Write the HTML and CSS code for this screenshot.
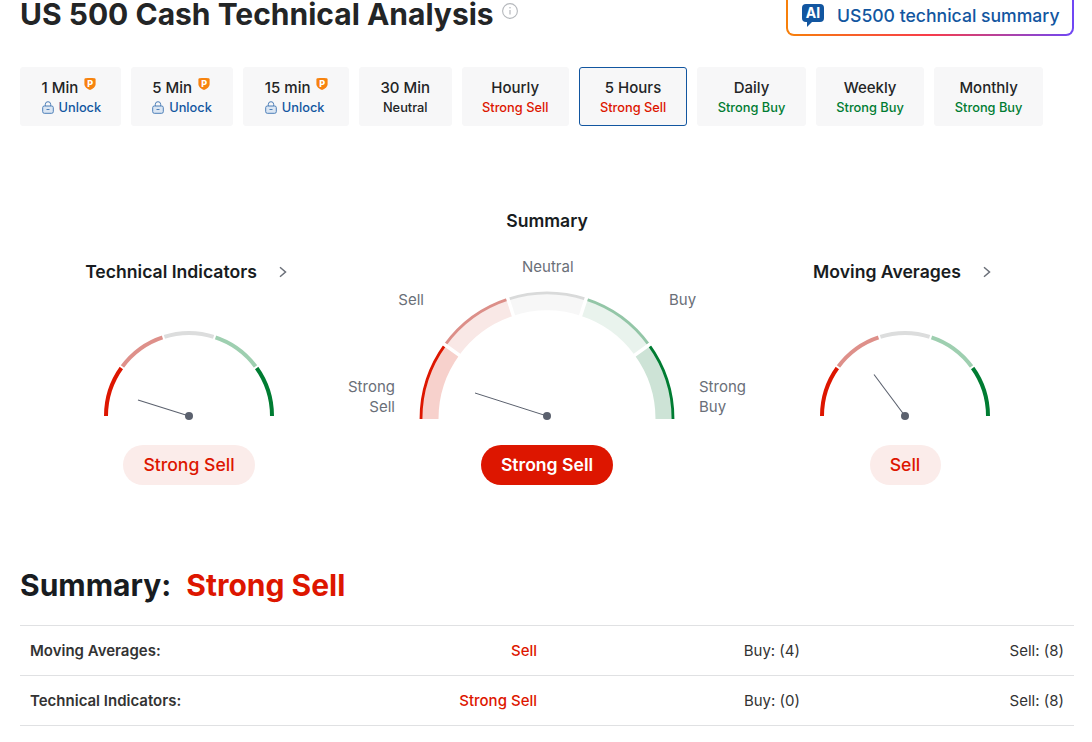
FILE: index.html
```html
<!DOCTYPE html>
<html lang="en">
<head>
<meta charset="utf-8">
<title>US 500 Cash Technical Analysis</title>
<link rel="stylesheet" href="styles.css">
</head>
<body>
<main class="page">
  <header class="header">
    <div class="title-wrap">
      <h1 class="title">US 500 Cash Technical Analysis</h1>
      <svg class="info" width="16" height="16" viewBox="0 0 16 16"><circle cx="8" cy="8" r="7.4" fill="none" stroke="#b5b8bc" stroke-width="1.1"/><path d="M8 7v4.6" stroke="#b5b8bc" stroke-width="1.2" fill="none"/><circle cx="8" cy="4.8" r=".8" fill="#b5b8bc"/></svg>
    </div>
    <a class="ai-btn">
      <span class="ai-icon"><span class="ai-text">AI</span></span>
      <span class="ai-label">US500 technical summary</span>
    </a>
  </header>

  <nav class="tabs">
    <div class="tab locked"><div class="tab-name">1 Min<svg class="pro" width="12" height="12" viewBox="0 0 12 12"><path d="M.4 1.400C.4.700 1 .4 1.600.3 3 .1 4.500 0 6 0s3 .1 4.400.3c.6.1 1.200.4 1.200 1.100V6c0 2.800-2.600 4.900-5.600 6C3 10.900.4 8.800.4 6z" fill="#f7830f"/><text x="6.300" y="8.600" class="pro-p">P</text></svg></div><div class="tab-sub unlock"><svg class="lock" width="12" height="13" viewBox="0 0 12 13"><rect x=".7" y="5" width="10.600" height="7.300" rx="1.600" fill="#dbe6f3" stroke="#4d7fb8"/><path d="M3.300 5V3.400a2.700 2.700 0 0 1 5.400 0V5" fill="none" stroke="#4d7fb8"/><path d="M4.500 8.500h3" stroke="#4d7fb8"/></svg>Unlock</div></div>
    <div class="tab locked locked-five"><div class="tab-name">5 Min<svg class="pro" width="12" height="12" viewBox="0 0 12 12"><path d="M.4 1.400C.4.700 1 .4 1.600.3 3 .1 4.500 0 6 0s3 .1 4.400.3c.6.1 1.200.4 1.200 1.100V6c0 2.800-2.600 4.900-5.600 6C3 10.900.4 8.800.4 6z" fill="#f7830f"/><text x="6.300" y="8.600" class="pro-p">P</text></svg></div><div class="tab-sub unlock"><svg class="lock" width="12" height="13" viewBox="0 0 12 13"><rect x=".7" y="5" width="10.600" height="7.300" rx="1.600" fill="#dbe6f3" stroke="#4d7fb8"/><path d="M3.300 5V3.400a2.700 2.700 0 0 1 5.400 0V5" fill="none" stroke="#4d7fb8"/><path d="M4.500 8.500h3" stroke="#4d7fb8"/></svg>Unlock</div></div>
    <div class="tab locked locked-fifteen"><div class="tab-name">15 min<svg class="pro" width="12" height="12" viewBox="0 0 12 12"><path d="M.4 1.400C.4.700 1 .4 1.600.3 3 .1 4.500 0 6 0s3 .1 4.400.3c.6.1 1.200.4 1.200 1.100V6c0 2.800-2.600 4.900-5.600 6C3 10.900.4 8.800.4 6z" fill="#f7830f"/><text x="6.300" y="8.600" class="pro-p">P</text></svg></div><div class="tab-sub unlock"><svg class="lock" width="12" height="13" viewBox="0 0 12 13"><rect x=".7" y="5" width="10.600" height="7.300" rx="1.600" fill="#dbe6f3" stroke="#4d7fb8"/><path d="M3.300 5V3.400a2.700 2.700 0 0 1 5.400 0V5" fill="none" stroke="#4d7fb8"/><path d="M4.500 8.500h3" stroke="#4d7fb8"/></svg>Unlock</div></div>
    <div class="tab tab-short"><div class="tab-name">30 Min</div><div class="tab-sub neutral">Neutral</div></div>
    <div class="tab"><div class="tab-name">Hourly</div><div class="tab-sub sell">Strong Sell</div></div>
    <div class="tab active"><div class="tab-name">5 Hours</div><div class="tab-sub sell">Strong Sell</div></div>
    <div class="tab"><div class="tab-name">Daily</div><div class="tab-sub buy">Strong Buy</div></div>
    <div class="tab"><div class="tab-name">Weekly</div><div class="tab-sub buy">Strong Buy</div></div>
    <div class="tab"><div class="tab-name">Monthly</div><div class="tab-sub buy">Strong Buy</div></div>
  </nav>

  <section class="gauges">
    <div class="gauge-col">
      <div class="gauge-title side-title"><span>Technical Indicators</span><svg class="chev" width="16" height="16" viewBox="0 0 16 16"><path d="M5 3.300 10.500 8l-5.500 4.700" fill="none" stroke="#6a6f78" stroke-width="1.500"/></svg></div>
      <svg class="small-gauge" width="170" height="89" viewBox="-85 -85 170 89">
        <g fill="none" stroke-width="4">
          <path d="M-83 0A83 83 0 0 1-67.150-48.790" stroke="#dd1600"/>
          <path d="M-67.150-48.790A83 83 0 0 1-25.650-78.940" stroke="#de908a"/>
          <path d="M-25.650-78.940A83 83 0 0 1 25.650-78.940" stroke="#dcdddd"/>
          <path d="M25.650-78.940A83 83 0 0 1 67.150-48.790" stroke="#9ecfb0"/>
          <path d="M67.150-48.790A83 83 0 0 1 83 0" stroke="#007c32"/>
        </g>
        <g stroke="#fff" stroke-width="2"><path d="M-64 -46.500-70.500-51.200M-24.400-75.200-26.900-82.900M24.400-75.200 26.900-82.900M64-46.500 70.500-51.200"/></g>
        <path d="M0 0-51-16" stroke="#5b616e" stroke-width="1.100"/><circle r="4" fill="#5b616e"/>
      </svg>
      <div class="pill pill-soft pill-wide">Strong Sell</div>
    </div>

    <div class="gauge-col">
      <div class="gauge-title center-title">Summary</div>
      <div class="big-gauge">
        <span class="g-label l-neutral">Neutral</span>
        <span class="g-label l-sell">Sell</span>
        <span class="g-label l-buy">Buy</span>
        <span class="g-label l-ssell">Strong<br>Sell</span>
        <span class="g-label l-sbuy">Strong<br>Buy</span>
        <svg width="256" height="128" viewBox="-128 -128 256 128">
          <g fill="none" stroke-width="17">
            <path d="M-117 0A117 117 0 0 1-94.660-68.770" stroke="#f7d1cc"/>
            <path d="M-94.660-68.770A117 117 0 0 1-36.160-111.270" stroke="#f9e8e6"/>
            <path d="M-36.160-111.270A117 117 0 0 1 36.160-111.270" stroke="#f7f7f7"/>
            <path d="M36.160-111.270A117 117 0 0 1 94.660-68.770" stroke="#e9f3ed"/>
            <path d="M94.660-68.770A117 117 0 0 1 117 0" stroke="#cde3d6"/>
          </g>
          <g fill="none" stroke-width="2.800">
            <path d="M-126 0A126 126 0 0 1-101.940-74.060" stroke="#dd1600"/>
            <path d="M-101.940-74.060A126 126 0 0 1-38.940-119.830" stroke="#dc8f89"/>
            <path d="M-38.940-119.830A126 126 0 0 1 38.940-119.830" stroke="#d9dada"/>
            <path d="M38.940-119.830A126 126 0 0 1 101.940-74.060" stroke="#93c6a7"/>
            <path d="M101.940-74.060A126 126 0 0 1 126 0" stroke="#007c32"/>
          </g>
          <g stroke="#fff" stroke-width="3.500"><path d="M-85-61.800-106-77M-32.500-100-40-123M32.500-100 40-123M85-61.800 106-77"/></g>
          <path d="M0-3-72-26" stroke="#5b616e" stroke-width="1"/><circle cy="-3" r="4" fill="#5b616e"/>
        </svg>
      </div>
      <div class="pill pill-solid pill-wide">Strong Sell</div>
    </div>

    <div class="gauge-col">
      <div class="gauge-title side-title"><span>Moving Averages</span><svg class="chev" width="16" height="16" viewBox="0 0 16 16"><path d="M5 3.300 10.500 8l-5.500 4.700" fill="none" stroke="#6a6f78" stroke-width="1.500"/></svg></div>
      <svg class="small-gauge" width="170" height="89" viewBox="-85 -85 170 89">
        <g fill="none" stroke-width="4">
          <path d="M-83 0A83 83 0 0 1-67.150-48.790" stroke="#dd1600"/>
          <path d="M-67.150-48.790A83 83 0 0 1-25.650-78.940" stroke="#de908a"/>
          <path d="M-25.650-78.940A83 83 0 0 1 25.650-78.940" stroke="#dcdddd"/>
          <path d="M25.650-78.940A83 83 0 0 1 67.150-48.790" stroke="#9ecfb0"/>
          <path d="M67.150-48.790A83 83 0 0 1 83 0" stroke="#007c32"/>
        </g>
        <g stroke="#fff" stroke-width="2"><path d="M-64 -46.500-70.500-51.200M-24.400-75.200-26.900-82.900M24.400-75.200 26.900-82.900M64-46.500 70.500-51.200"/></g>
        <path d="M0 0-31-41.500" stroke="#5b616e" stroke-width="1.100"/><circle r="4" fill="#5b616e"/>
      </svg>
      <div class="pill pill-soft pill-narrow">Sell</div>
    </div>
  </section>

  <h2 class="overall">Summary:<span class="overall-value">Strong Sell</span></h2>

  <section class="table">
    <div class="row"><div class="row-label">Moving Averages:</div><div class="row-val sell">Sell</div><div class="row-num">Buy: (4)</div><div class="row-num">Sell: (8)</div></div>
    <div class="row"><div class="row-label">Technical Indicators:</div><div class="row-val sell">Strong Sell</div><div class="row-num">Buy: (0)</div><div class="row-num">Sell: (8)</div></div>
  </section>
</main>
</body>
</html>
```

FILE: styles.css
```css
* { box-sizing: border-box; }
html, body { margin: 0; padding: 0; background: #fff; overflow: hidden; }
body { font-family: Inter, "Liberation Sans", sans-serif; color: #181c21; }

.page { width: 1054px; margin: -7px 0 0 20px; }

.header { display: flex; justify-content: space-between; align-items: flex-end; height: 43px; }
.title-wrap { display: flex; align-items: flex-start; gap: 8px; align-self: flex-start; }
.title { margin: 0; font-size: 30px; line-height: 42px; font-weight: 700; color: #232526; white-space: nowrap; }
.info { margin-top: 10px; }

.ai-btn {
  display: flex; align-items: center; gap: 13px;
  height: 46px; width: 288px; padding: 5px 0 0 14px;
  border: 2px solid transparent; border-radius: 8px;
  background: linear-gradient(#fff, #fff) padding-box,
              linear-gradient(90deg, #f7800a 0%, #f83b4a 50%, #6f47f5 100%) border-box;
  font-size: 17.600px; font-weight: 500; color: #1256a0;
}
.ai-label { white-space: nowrap; }
.ai-icon {
  position: relative; width: 22px; height: 18px; flex: none; margin-bottom: 6px;
  border-radius: 4px; background: #1256a0;
  display: flex; align-items: center; justify-content: center;
}
.ai-icon::after {
  content: ""; position: absolute; left: 5px; top: 100%; width: 0; height: 0;
  border-right: 5px solid transparent; border-top: 5px solid #1256a0;
}
.ai-text { font-size: 14px; font-weight: 700; color: #fff; line-height: 1; }

.tabs { display: flex; gap: 10px; margin-top: 31px; }
.tab {
  height: 59px; padding: 2px 19.500px 0; border: 1px solid #f7f7f8; border-radius: 3px;
  background: #f7f7f8; display: flex; flex-direction: column; align-items: center; justify-content: center;
}
.tab.locked { align-items: flex-start; padding-left: 20.500px; padding-right: 18.500px; }
.tab.locked-five { padding-right: 20.500px; }
.tab.locked-fifteen { padding-right: 19.500px; }
.tab.tab-short { padding-left: 20.500px; padding-right: 20.500px; }
.tab.active { border-color: #1256a0; padding-left: 20px; padding-right: 20px; }
.tab-name { font-size: 15px; line-height: 20px; font-weight: 500; color: #232526; display: flex; align-items: flex-start; gap: 6px; white-space: nowrap; }
.tab-sub { font-size: 12.800px; line-height: 20px; font-weight: 500; white-space: nowrap; }
.pro-p { font-size: 9px; font-weight: 800; fill: #fff; text-anchor: middle; font-family: Inter, sans-serif; }
.unlock { color: #1256a0; display: flex; align-items: center; gap: 5px; }
.sell { color: #dd1600; }
.buy { color: #007c32; }
.neutral { color: #232526; }

.gauges { display: grid; grid-template-columns: 338px 378px 338px; margin-top: 84px; align-items: end; }
.gauge-col { display: flex; flex-direction: column; align-items: center; }
.gauge-title { font-size: 17.600px; line-height: 22px; font-weight: 600; color: #181c21; }
.center-title { margin-bottom: 59px; }
.side-title { display: flex; align-items: center; gap: 18px; margin-bottom: 48px; }
.chev { flex: none; margin-right: 2px; }
.small-gauge { display: block; margin-bottom: 25px; overflow: visible; }
.big-gauge { position: relative; width: 256px; height: 128px; margin-bottom: 26px; }
.big-gauge svg { display: block; overflow: visible; }
.g-label { position: absolute; font-size: 15px; line-height: 20px; color: #6a6f78; white-space: nowrap; }
.l-neutral { left: 103px; top: -34px; }
.l-sell { right: 251px; top: -1px; }
.l-buy { left: 250px; top: -1px; }
.l-ssell { right: 280px; top: 86px; text-align: right; }
.l-sbuy { left: 280px; top: 86px; }

.pill { height: 40px; padding-bottom: 1px; border-radius: 20px; display: flex; align-items: center; justify-content: center; font-size: 17.600px; font-weight: 500; }
.pill-wide { width: 132px; }
.pill-narrow { width: 71px; }
.pill-soft { background: #fbecea; color: #dd1600; }
.pill-solid { background: #dd1600; color: #fff; font-weight: 600; }

.overall { margin: 83px 0 0; font-size: 30px; line-height: 34px; font-weight: 700; color: #181c21; }
.overall-value { color: #dd1600; margin-left: 15px; }

.table { margin-top: 23px; border-top: 1px solid #e0e1e3; }
.row {
  display: grid; grid-template-columns: 254px 253px 263px 264px;
  align-items: center; height: 50px; padding: 0 10px; border-bottom: 1px solid #e0e1e3;
  font-size: 15px;
}
.row-label { font-weight: 600; color: #333; }
.row-val { text-align: right; font-weight: 500; }
.row-num { text-align: right; color: #333; }
```
